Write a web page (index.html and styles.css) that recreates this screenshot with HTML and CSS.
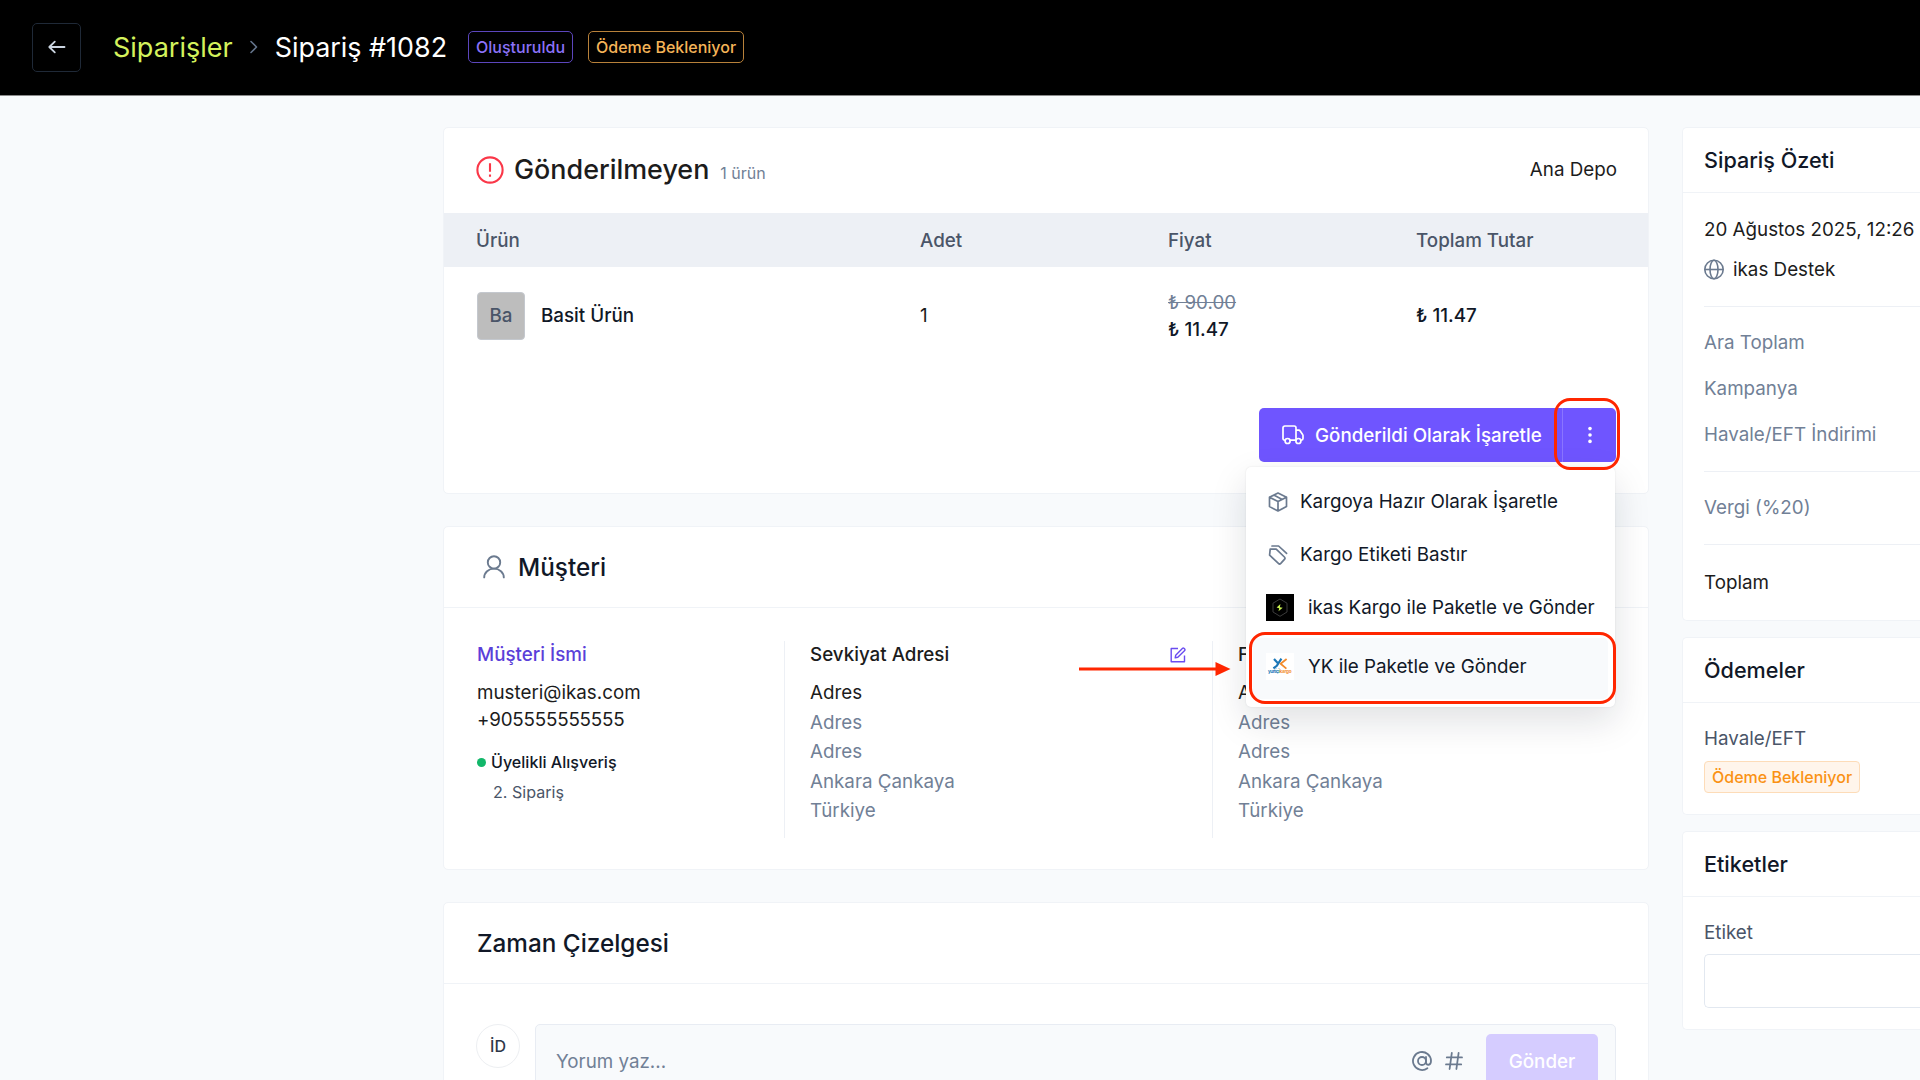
FILE: index.html
```html
<!DOCTYPE html>
<html lang="tr">
<head>
    <meta charset="utf-8">
    <title>Sipariş #1082</title>
    <link rel="stylesheet" href="styles.css">
</head>
<body>
    <header class="topbar">
        <button class="back-button">
            <svg width="18" height="18" viewBox="0 0 18 18" fill="none" stroke="currentColor" stroke-width="1.8" stroke-linecap="round" stroke-linejoin="round"><path d="M16.500 9H1.500M6.800 3.600 1.300 9l5.500 5.400"/></svg>
        </button>
        <a class="crumb-link">Siparişler</a>
        <svg class="crumb-sep" width="8" height="14" viewBox="0 0 8 14" fill="none" stroke="currentColor" stroke-width="1.6" stroke-linecap="round" stroke-linejoin="round"><path d="m1 1.500 5.500 5.500L1 12.500"/></svg>
        <h1 class="crumb-title">Sipariş #1082</h1>
        <span class="badge badge-purple">Oluşturuldu</span>
        <span class="badge badge-orange">Ödeme Bekleniyor</span>
    </header>

    <div class="layout">
        <main class="content">
            <section class="card unshipped">
                <div class="unshipped-header">
                    <svg width="28" height="28" viewBox="0 0 28 28" fill="none" stroke="#fa3748" stroke-width="2.1"><circle cx="14" cy="14" r="12.6"/><path d="M14 7.2v8.6M14 18.4v2.4"/></svg>
                    <h2>Gönderilmeyen</h2>
                    <span class="count">1 ürün</span>
                    <span class="location">Ana Depo</span>
                </div>
                <div class="table-row table-head">
                    <span>Ürün</span>
                    <span>Adet</span>
                    <span>Fiyat</span>
                    <span>Toplam Tutar</span>
                </div>
                <div class="table-row table-item">
                    <div class="product">
                        <span class="thumb">Ba</span>
                        <span class="product-name">Basit Ürün</span>
                    </div>
                    <span>1</span>
                    <div class="price">
                        <del>₺ 90.00</del>
                        <span>₺ 11.47</span>
                    </div>
                    <span class="total">₺ 11.47</span>
                </div>
                <div class="actions">
                    <div class="split-button">
                        <button class="split-main">
                            <svg width="22" height="20" viewBox="0 0 22 20" fill="none" stroke="currentColor" stroke-width="1.7" stroke-linejoin="round" stroke-linecap="round"><path d="M3 15.2H2.6A1.6 1.6 0 0 1 1 13.6V2.8A1.8 1.8 0 0 1 2.8 1h9.4A1.8 1.8 0 0 1 14 2.8v12.4H8.2M14 5.2h2.6a2 2 0 0 1 1.6.8l2.4 3.4c.3.4.4.8.4 1.2v3a1.6 1.6 0 0 1-1.6 1.6"/><circle cx="5.6" cy="16" r="2.5"/><circle cx="16.4" cy="16" r="2.5"/></svg>
                            <span>Gönderildi Olarak İşaretle</span>
                        </button>
                        <button class="split-more">
                            <svg width="4" height="18" viewBox="0 0 4 18" fill="currentColor"><circle cx="2" cy="2.6" r="1.8"/><circle cx="2" cy="9" r="1.8"/><circle cx="2" cy="15.4" r="1.8"/></svg>
                        </button>
                        <div class="ring ring-more"></div>
                        <div class="menu">
                            <div class="menu-item">
                                <svg width="20" height="20" viewBox="0 0 20 20" fill="none" stroke="#6b7a8f" stroke-width="1.7" stroke-linejoin="round" stroke-linecap="round"><path d="m10 1 8.500 4.2v9.4L10 19l-8.500-4.4V5.2zM1.500 5.2l8.500 4.3 8.500-4.3M10 9.5V19M5.800 3.1l8.400 4.3"/></svg>
                                <span>Kargoya Hazır Olarak İşaretle</span>
                            </div>
                            <div class="menu-item">
                                <svg width="20" height="20" viewBox="0 0 20 20" fill="none" stroke="#6b7a8f" stroke-width="1.7" stroke-linejoin="round" stroke-linecap="round"><path d="M2.200 4.200h6L16.400 12a1.700 1.700 0 0 1 0 2.400l-3.600 4a1.700 1.700 0 0 1-2.400 0L1.600 10.200z"/><path d="M4 1h6.600l8 7.400"/></svg>
                                <span>Kargo Etiketi Bastır</span>
                            </div>
                            <div class="menu-item menu-item-app">
                                <svg width="28" height="27" viewBox="0 0 28 27"><path fill="#000" d="M0 0h28v27H0z"/><path fill="none" stroke="#3c3c3c" d="m14 5 7 4.2v8.8l-7 4.3L7 18V9.2z"/><path fill="#c8f050" d="m14.400 10-3.800 3.600 2.600.7-.7 3 4.200-3.500-2.800-.6z"/></svg>
                                <span>ikas Kargo ile Paketle ve Gönder</span>
                            </div>
                            <div class="menu-item menu-item-app menu-item-active">
                                <svg class="yk-logo" width="28" height="27" viewBox="0 0 28 27"><path fill="#fff" d="M0 0h28v27H0z"/><path fill="none" stroke="#1c78b8" stroke-width="2.2" d="m8 6 4.2 4.4M15.4 5.6l-4.6 7.2-3.4 2.6"/><path fill="none" stroke="#f28a2c" stroke-width="1.8" d="m20.6 6-6 4.8 5.8 4.8"/><text x="2" y="20.4" textLength="11.5" fill="#1c78b8">yurtiçi</text><text x="13.5" y="20.4" textLength="12" fill="#f28a2c">kargo</text></svg>
                                <span>YK ile Paketle ve Gönder</span>
                            </div>
                            <div class="ring ring-item"></div>
                            <svg class="arrow" width="152" height="16" viewBox="0 0 152 16"><path stroke="#ff2600" stroke-width="3" d="M0 8h138"/><path fill="#ff2600" d="M136.500 1 151.500 8l-15 7z"/></svg>
                        </div>
                    </div>
                </div>
            </section>

            <section class="card customer">
                <div class="card-header">
                    <svg width="22" height="24" viewBox="0 0 22 24" fill="none" stroke="#6b7a8f" stroke-width="1.9" stroke-linecap="round"><circle cx="11" cy="7.4" r="6.2"/><path d="M1.200 22.400a9.800 8.800 0 0 1 19.600 0"/></svg>
                    <h2>Müşteri</h2>
                </div>
                <div class="customer-body">
                    <div class="customer-info">
                        <a class="customer-name">Müşteri İsmi</a>
                        <p class="contact">musteri@ikas.com</p>
                        <p class="phone">+905555555555</p>
                        <p class="membership"><i class="dot"></i>Üyelikli Alışveriş</p>
                        <p class="order-no">2. Sipariş</p>
                    </div>
                    <div class="address">
                        <div class="address-title">
                            <h3>Sevkiyat Adresi</h3>
                            <svg width="16" height="16" viewBox="0 0 16 16" fill="none" stroke="#6a4cf0" stroke-width="1.4" stroke-linejoin="round"><path d="M8 1.500H1.200v13.300h13.300V8.500M5.200 10.800l.5-2.600 6.900-6.900a.9.900 0 0 1 1.300 0l.8.800a.9.900 0 0 1 0 1.300l-6.900 6.900z"/></svg>
                        </div>
                        <p class="address-first">Adres</p>
                        <p>Adres</p>
                        <p>Adres</p>
                        <p>Ankara Çankaya</p>
                        <p>Türkiye</p>
                    </div>
                    <div class="address">
                        <div class="address-title">
                            <h3>Fatura Adresi</h3>
                        </div>
                        <p class="address-first">Adres</p>
                        <p>Adres</p>
                        <p>Adres</p>
                        <p>Ankara Çankaya</p>
                        <p>Türkiye</p>
                    </div>
                </div>
            </section>

            <section class="card timeline">
                <div class="card-header">
                    <h2>Zaman Çizelgesi</h2>
                </div>
                <div class="comment">
                    <span class="avatar">İD</span>
                    <div class="comment-box">
                        <span class="placeholder">Yorum yaz...</span>
                        <svg width="20" height="20" viewBox="0 0 20 20" fill="none" stroke="#6b7a8f" stroke-width="1.8" stroke-linecap="round"><circle cx="10" cy="10" r="4"/><path d="M14 6v5.200c0 3.800 5 3.400 5-1.200A9 9 0 1 0 15.400 17.200"/></svg>
                        <svg class="hash" width="18" height="18" viewBox="0 0 18 18" fill="none" stroke="#6b7a8f" stroke-width="1.8" stroke-linecap="round"><path d="M1.800 5.400h15.200M1 12.400h15.200M6.800 1 4.600 17M13.600 1l-2.200 16"/></svg>
                        <button class="send">Gönder</button>
                    </div>
                </div>
            </section>
        </main>

        <aside class="sidebar">
            <section class="card summary">
                <h3 class="side-header">Sipariş Özeti</h3>
                <div class="side-body">
                    <div class="summary-group summary-meta">
                        <p>20 Ağustos 2025, 12:26</p>
                        <p class="channel">
                            <svg width="20" height="21" viewBox="0 0 20 21" fill="none" stroke="#6b7a8f" stroke-width="1.600"><circle cx="10" cy="10.500" r="9.200"/><ellipse cx="10" cy="10.500" rx="4" ry="9.200"/><path d="M.8 10.500h18.400"/></svg>
                            ikas Destek
                        </p>
                    </div>
                    <div class="summary-group summary-lines">
                        <p>Ara Toplam</p>
                        <p>Kampanya</p>
                        <p>Havale/EFT İndirimi</p>
                    </div>
                    <div class="summary-group summary-lines">
                        <p>Vergi (%20)</p>
                    </div>
                    <p class="summary-total">Toplam</p>
                </div>
            </section>

            <section class="card payments">
                <h3 class="side-header">Ödemeler</h3>
                <div class="side-body">
                    <p class="side-label">Havale/EFT</p>
                    <span class="tag">Ödeme Bekleniyor</span>
                </div>
            </section>

            <section class="card tags">
                <h3 class="side-header">Etiketler</h3>
                <div class="side-body">
                    <p class="side-label">Etiket</p>
                    <div class="tag-input"></div>
                </div>
            </section>
        </aside>
    </div>
</body>
</html>
```

FILE: styles.css
```css
* {
    box-sizing: border-box;
}

body {
    margin: 0;
    height: 1080px;
    overflow: hidden;
    background: #f8fafc;
    color: #1c1c1c;
    font-family: Inter, sans-serif;
    font-size: 18.8px;
    line-height: 27px;
}

h1, h2, h3, p {
    margin: 0;
    font-weight: 500;
}

p {
    font-weight: 400;
}

button {
    font-family: inherit;
    font-size: inherit;
    padding: 0;
    border: none;
}

svg {
    display: block;
    flex: none;
}

/* top bar */
.topbar {
    display: flex;
    align-items: center;
    height: 96px;
    padding: 0 32px 1px;
    background: #000;
    border-bottom: 1px solid #8a8a8a;
}

.back-button {
    display: flex;
    align-items: center;
    justify-content: center;
    width: 49px;
    height: 49px;
    margin-right: 32px;
    background: transparent;
    border: 1px solid #1f2937;
    border-radius: 5px;
    color: #cbd5e1;
}

.crumb-link {
    color: #d4f25c;
    font-size: 27px;
}

.crumb-sep {
    margin: 0 17px;
    color: #64748b;
}

.crumb-title {
    color: #fff;
    font-size: 26.9px;
    font-weight: 400;
}

.badge {
    height: 32px;
    padding: 0 7px;
    border: 1px solid;
    border-radius: 5px;
    font-size: 16px;
    font-weight: 500;
    line-height: 30px;
}

.badge-purple {
    margin-left: 21px;
    color: #8b72f8;
    border-color: #5c46bd;
}

.badge-orange {
    margin-left: 15px;
    color: #f5b458;
    border-color: #b8813a;
}

/* page grid */
.layout {
    display: flex;
    align-items: flex-start;
    gap: 33px;
    padding: 31px 0 0 443px;
}

.content {
    display: flex;
    flex-direction: column;
    gap: 32px;
    flex: none;
    width: 1206px;
}

.card {
    background: #fff;
    border: 1px solid #f0f3f7;
    border-radius: 5px;
}

.card-header {
    display: flex;
    align-items: center;
    gap: 13px;
    height: 81px;
    padding: 0 33px;
    border-bottom: 1px solid #f0f3f7;
    color: #111827;
}

.card-header h2 {
    font-size: 24.3px;
}

/* unshipped products */
.unshipped {
    height: 367px;
}

.unshipped-header {
    display: flex;
    align-items: center;
    height: 85px;
    padding: 0 31px 2px 32px;
}

.unshipped-header h2 {
    margin-left: 10px;
    font-size: 26.9px;
}

.count {
    margin: 8px 0 0 11px;
    color: #718096;
    font-size: 16px;
}

.location {
    margin-left: auto;
}

.table-row {
    display: grid;
    grid-template-columns: 444px 248px 248px 1fr;
    align-items: center;
    padding-left: 32px;
}

.table-head {
    height: 54px;
    background: #edf0f5;
    color: #4a5568;
    font-weight: 500;
}

.table-item {
    height: 97px;
}

.product {
    display: flex;
    align-items: center;
    gap: 16px;
    color: #111827;
    font-weight: 500;
}

.thumb {
    width: 48px;
    height: 48px;
    margin-left: 1px;
    background: #bdbdbd;
    border: 1px solid #c4c8ce;
    border-radius: 4px;
    color: #4a5568;
    line-height: 46px;
    text-align: center;
}

.price {
    display: flex;
    flex-direction: column;
}

.price del {
    color: #718096;
}

.price span,
.total {
    color: #111827;
    font-weight: 500;
}

.actions {
    display: flex;
    justify-content: flex-end;
    padding: 44px 32px 0 0;
}

.split-button {
    display: flex;
    position: relative;
}

.split-main,
.split-more {
    display: flex;
    align-items: center;
    height: 54px;
    background: #6f55ff;
    color: #fff;
    font-weight: 500;
}

.split-main {
    gap: 11px;
    width: 303px;
    padding-left: 23px;
    border-radius: 5px 0 0 5px;
}

.split-more {
    justify-content: center;
    width: 54px;
    border-left: 1px solid #8a75ff;
    border-radius: 0 5px 5px 0;
}

/* dropdown */
.menu {
    position: absolute;
    top: 59px;
    right: 1px;
    z-index: 2;
    width: 369px;
    height: 240px;
    padding: 8px 7px;
    background: #fff;
    border-radius: 5px;
    box-shadow: 0 0 2px rgba(0, 0, 0, 0.1), 0 14px 36px rgba(15, 23, 42, 0.13);
}

.menu-item {
    display: flex;
    align-items: center;
    gap: 12px;
    height: 53px;
    padding: 0 14px 0 15px;
    color: #111827;
    white-space: nowrap;
}

.menu-item-app {
    gap: 14px;
    padding-left: 13px;
}

.menu-item-active {
    height: 61px;
    margin-top: 4px;
    padding-bottom: 4px;
    background: #f8fafc;
    border-radius: 5px;
}

.yk-logo text {
    font-size: 4.6px;
    font-weight: 700;
}

/* red callouts */
.ring {
    position: absolute;
    border: 3px solid #ff2600;
    border-radius: 16px;
}

.ring-more {
    top: -10px;
    right: -4px;
    z-index: 3;
    width: 66px;
    height: 72px;
}

.ring-item {
    top: 165px;
    right: -1px;
    width: 367px;
    height: 72px;
}

.arrow {
    position: absolute;
    top: 194px;
    left: -167px;
}

/* customer */
.customer {
    height: 344px;
}

.customer .card-header {
    padding-left: 39px;
}

.customer-body {
    display: grid;
    grid-template-columns: 340px 428px 1fr;
    height: 197px;
    margin-top: 33px;
}

.customer-info {
    padding-left: 33px;
}

.customer-name {
    color: #5b3fd9;
    font-weight: 500;
}

.contact {
    margin-top: 11px;
}

.phone {
    letter-spacing: -0.2px;
}

.membership {
    display: flex;
    align-items: center;
    gap: 5px;
    margin-top: 16px;
    color: #111827;
    font-size: 16.1px;
    font-weight: 500;
}

.dot {
    width: 9px;
    height: 9px;
    border-radius: 50%;
    background: #12b76a;
}

.order-no {
    margin: 3px 0 0 16px;
    color: #4a5568;
    font-size: 16.1px;
}

.address {
    padding: 0 26px 0 25px;
    border-left: 1px solid #edf0f5;
}

.address-title {
    display: flex;
    align-items: center;
    justify-content: space-between;
    margin-bottom: 10px;
}

.address-title h3 {
    font-size: 18.8px;
}

.address p {
    color: #718096;
    line-height: 29.5px;
}

.address .address-first {
    color: #1c1c1c;
}

/* timeline */
.comment {
    display: flex;
    gap: 15px;
    padding: 40px 32px 32px;
}

.avatar {
    flex: none;
    width: 44px;
    height: 44px;
    border: 1px solid #edeff2;
    border-radius: 50%;
    color: #2d3748;
    font-size: 16px;
    font-weight: 500;
    line-height: 42px;
    text-align: center;
}

.comment-box {
    display: flex;
    align-items: center;
    flex: 1;
    height: 74px;
    padding: 0 17px 0 20px;
    background: #f8fafc;
    border: 1px solid #e8ecf3;
    border-radius: 5px;
}

.placeholder {
    flex: 1;
    color: #718096;
}

.hash {
    margin: 0 23px 0 13px;
}

.send {
    width: 112px;
    height: 54px;
    background: #d5ccff;
    border-radius: 5px;
    color: #fff;
    font-weight: 500;
}

/* sidebar */
.sidebar {
    display: flex;
    flex-direction: column;
    gap: 16px;
    flex: 1;
    min-width: 0;
}

.sidebar .card {
    border-right: none;
    border-radius: 5px 0 0 5px;
}

.side-header {
    height: 65px;
    padding-left: 21px;
    border-bottom: 1px solid #f0f3f7;
    color: #111827;
    font-size: 21.6px;
    line-height: 65px;
}

.side-body {
    padding-left: 21px;
    white-space: nowrap;
}

.summary {
    height: 494px;
}

.summary-group {
    border-bottom: 1px solid #edf0f5;
}

.summary-meta {
    padding: 23px 0;
}

.channel {
    display: flex;
    align-items: center;
    gap: 9px;
    margin-top: 13px;
}

.summary-lines {
    display: flex;
    flex-direction: column;
    gap: 19px;
    padding: 22px 0 23px;
    color: #718096;
}

.summary-total {
    padding-top: 24px;
}

.payments {
    height: 178px;
}

.side-label {
    margin-top: 22px;
    color: #4a5568;
}

.tag {
    display: inline-block;
    height: 32px;
    margin-top: 9px;
    padding: 0 7px;
    background: #fff5eb;
    border: 1px solid #fddcb8;
    border-radius: 4px;
    color: #fa9214;
    font-size: 16px;
    font-weight: 500;
    line-height: 30px;
}

.tags {
    height: 199px;
}

.tag-input {
    height: 54px;
    margin-top: 8px;
    border: 1px solid #e2e8f0;
    border-right: none;
    border-radius: 5px 0 0 5px;
}
```
